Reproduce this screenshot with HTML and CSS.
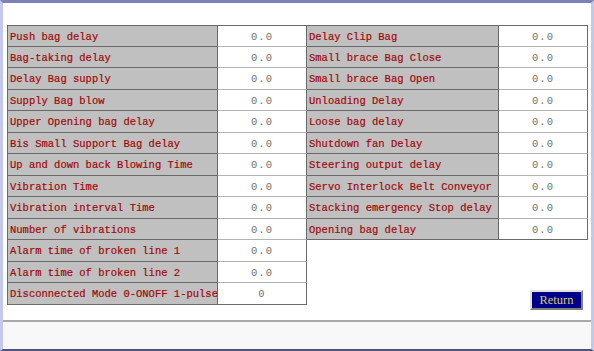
FILE: index.html
```html
<!DOCTYPE html>
<html>
<head>
<meta charset="utf-8">
<link rel="stylesheet" href="styles.css">
</head>
<body>
<div class="window">
  <div class="content">
    <div class="col col-left">
      <div class="row"><div class="label">Push bag delay</div><div class="value">0.0</div></div>
      <div class="row"><div class="label">Bag-taking delay</div><div class="value">0.0</div></div>
      <div class="row"><div class="label">Delay Bag supply</div><div class="value">0.0</div></div>
      <div class="row"><div class="label">Supply Bag blow</div><div class="value">0.0</div></div>
      <div class="row"><div class="label">Upper Opening bag delay</div><div class="value">0.0</div></div>
      <div class="row"><div class="label">Bis Small Support Bag delay</div><div class="value">0.0</div></div>
      <div class="row"><div class="label">Up and down back Blowing Time</div><div class="value">0.0</div></div>
      <div class="row"><div class="label">Vibration Time</div><div class="value">0.0</div></div>
      <div class="row"><div class="label">Vibration interval Time</div><div class="value">0.0</div></div>
      <div class="row"><div class="label">Number of vibrations</div><div class="value">0.0</div></div>
      <div class="row"><div class="label">Alarm time of broken line 1</div><div class="value">0.0</div></div>
      <div class="row"><div class="label">Alarm time of broken line 2</div><div class="value">0.0</div></div>
      <div class="row"><div class="label">Disconnected Mode 0-ONOFF 1-pulse</div><div class="value">0</div></div>
    </div>
    <div class="col col-right">
      <div class="row"><div class="label">Delay Clip Bag</div><div class="value">0.0</div></div>
      <div class="row"><div class="label">Small brace Bag Close</div><div class="value">0.0</div></div>
      <div class="row"><div class="label">Small brace Bag Open</div><div class="value">0.0</div></div>
      <div class="row"><div class="label">Unloading Delay</div><div class="value">0.0</div></div>
      <div class="row"><div class="label">Loose bag delay</div><div class="value">0.0</div></div>
      <div class="row"><div class="label">Shutdown fan Delay</div><div class="value">0.0</div></div>
      <div class="row"><div class="label">Steering output delay</div><div class="value">0.0</div></div>
      <div class="row"><div class="label">Servo Interlock Belt Conveyor</div><div class="value">0.0</div></div>
      <div class="row"><div class="label">Stacking emergency Stop delay</div><div class="value">0.0</div></div>
      <div class="row"><div class="label">Opening bag delay</div><div class="value">0.0</div></div>
      <button class="return">Return</button>
    </div>
  </div>
  <div class="footer"></div>
</div>
</body>
</html>
```

FILE: styles.css
```css
html, body {
  margin: 0;
  padding: 0;
  background: #ffffff;
}

.window {
  width: 594px;
  height: 351px;
  box-sizing: border-box;
  border-top: 3px solid #7a82b6;
  border-left: 3px solid #c4c8ec;
  border-right: 3px solid #c4c8ec;
  border-bottom: 2px solid #4e5678;
  background: #ffffff;
  display: flex;
  flex-direction: column;
  overflow: hidden;
}

.content {
  height: 317px;
  box-sizing: border-box;
  padding-top: 22px;
  padding-left: 4px;
  display: flex;
  align-items: flex-start;
}

.col {
  display: flex;
  flex-direction: column;
}

.col-left {
  width: 300px;
}

.col-right {
  width: 281px;
}

.row {
  display: flex;
  height: 21.5px;
  box-sizing: border-box;
}

.label {
  box-sizing: border-box;
  background: #c0c0c0;
  color: #a00808;
  font-family: "Liberation Mono", "DejaVu Sans Mono", monospace;
  font-size: 10.5px;
  line-height: 22px;
  padding-left: 2px;
  white-space: nowrap;
  overflow: hidden;
  border-bottom: 1px solid #6a6a6a;
  border-right: 1px solid #6a6a6a;
  -webkit-text-stroke: 0.2px #a00808;
}

.col-left .label {
  width: 211px;
  border-left: 1px solid #6a6a6a;
}

.col-right .label {
  width: 192px;
}

.row:first-child .label,
.row:first-child .value {
  border-top: 1px solid #6a6a6a;
}

.value {
  box-sizing: border-box;
  width: 89px;
  background: #ffffff;
  color: #707070;
  font-family: "Liberation Mono", "DejaVu Sans Mono", monospace;
  font-size: 10.5px;
  line-height: 22px;
  text-align: center;
  letter-spacing: 1px;
  border-bottom: 1px solid #b4b4b4;
  border-right: 1px solid #6a6a6a;
}

.col-left .row:last-child .value {
  border-bottom-color: #6a6a6a;
}

.col-right .row:nth-child(10) .value {
  border-bottom-color: #6a6a6a;
}

.return {
  align-self: flex-end;
  margin-top: 50px;
  margin-right: 5px;
  width: 53px;
  height: 20px;
  padding: 0;
  background: #000088;
  color: #d0c878;
  font-family: "Liberation Serif", serif;
  font-size: 12.5px;
  border: 2px solid;
  border-color: #e0e0e0 #808080 #808080 #e0e0e0;
}

.footer {
  flex: 1;
  border-top: 2px solid #a8a8a8;
  background: #f8f8f8;
}
```
